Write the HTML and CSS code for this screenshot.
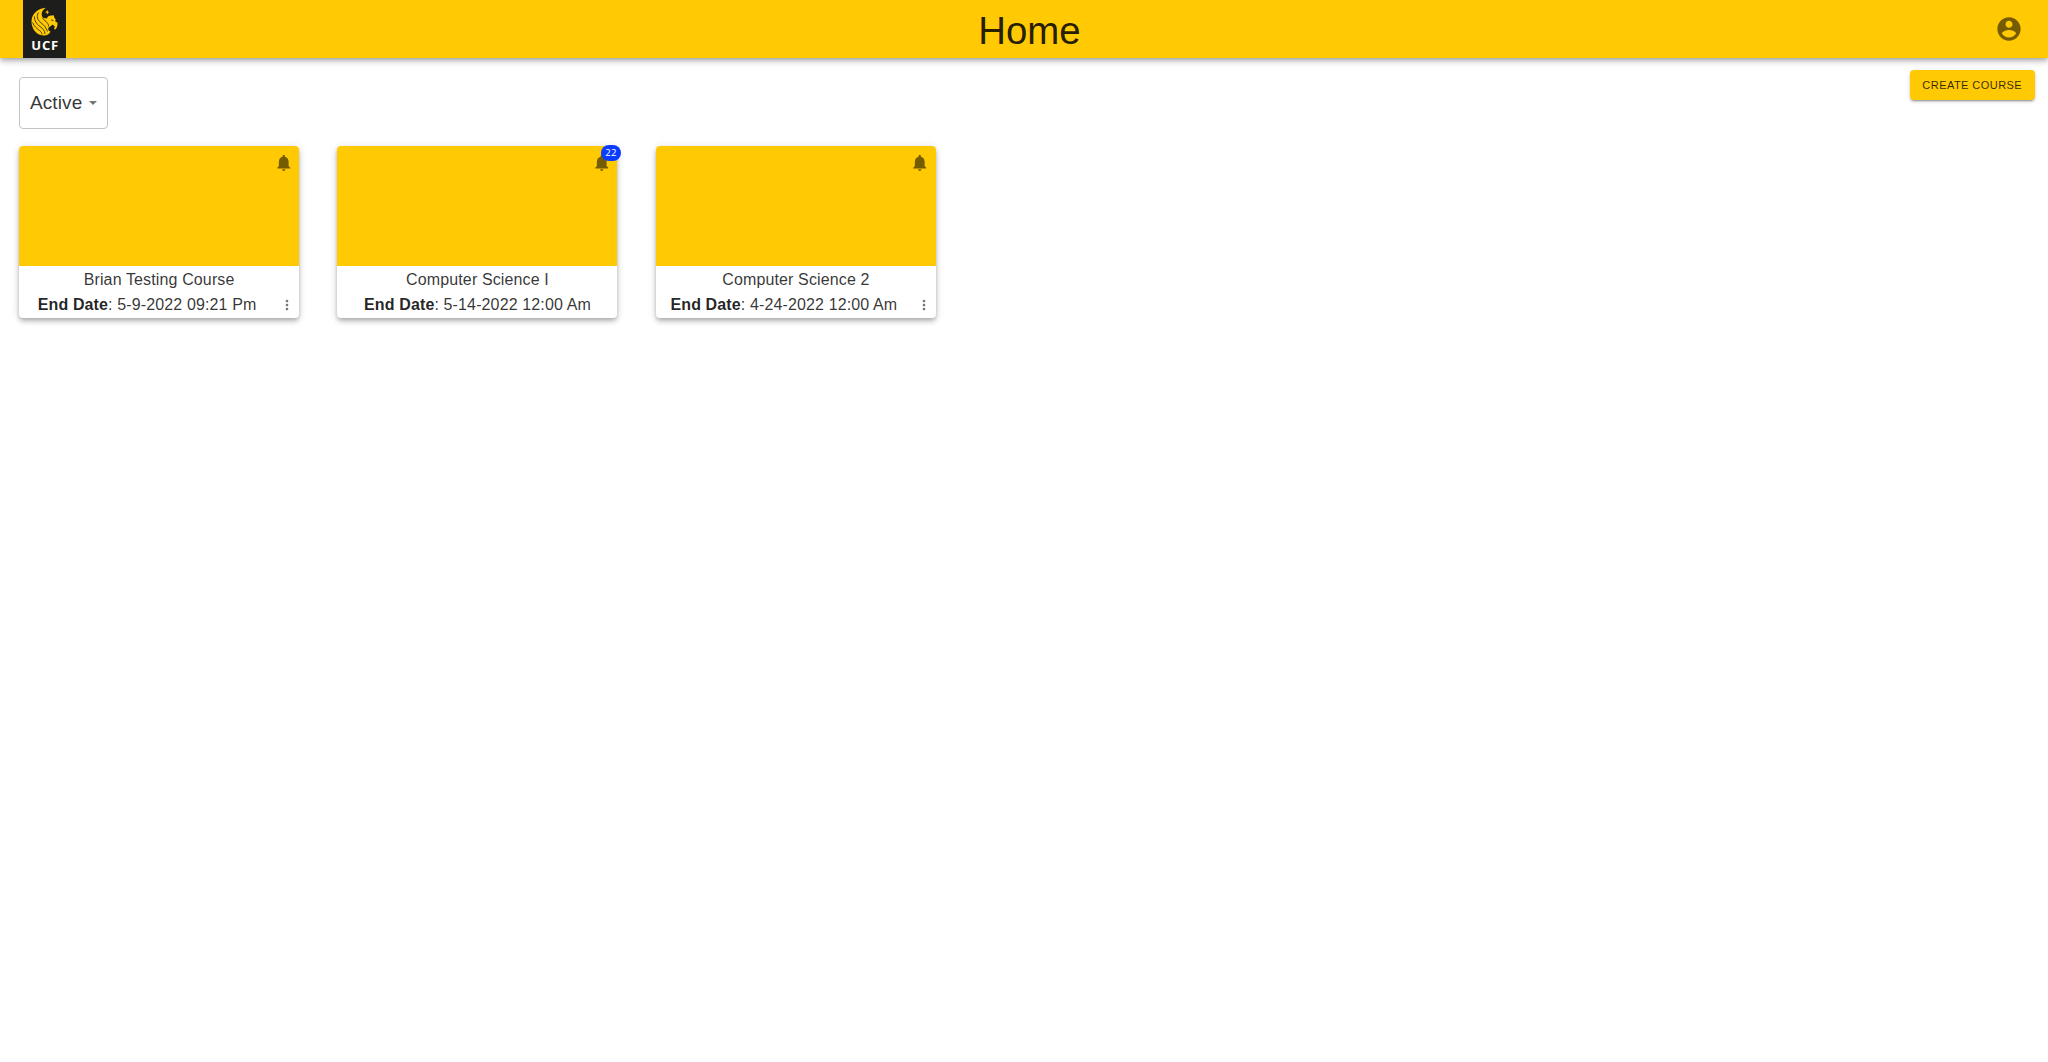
FILE: index.html
```html
<!DOCTYPE html>
<html lang="en">
<head>
<meta charset="utf-8">
<title>Home</title>
<link rel="stylesheet" href="styles.css">
</head>
<body>
<svg class="sprite" aria-hidden="true">
  <symbol id="bell" viewBox="0 0 24 24"><path d="M12 22c1.1 0 2-.9 2-2h-4c0 1.1.89 2 2 2zm6-6v-5c0-3.07-1.64-5.64-4.5-6.32V4c0-.83-.67-1.5-1.5-1.5s-1.5.67-1.5 1.5v.68C7.63 5.36 6 7.92 6 11v5l-2 2v1h16v-1l-2-2z"/></symbol>
  <symbol id="more" viewBox="0 0 24 24"><path d="M12 8c1.1 0 2-.9 2-2s-.9-2-2-2-2 .9-2 2 .9 2 2 2zm0 2c-1.100 0-2 .9-2 2s.9 2 2 2 2-.9 2-2-.9-2-2-2zm0 6c-1.100 0-2 .9-2 2s.9 2 2 2 2-.9 2-2-.9-2-2-2z"/></symbol>
</svg>
<header class="bar">
  <div class="logo">
    <svg class="pegasus" viewBox="0 0 27 29">
      <path d="M15 .8C7 1.600.6 6.500.5 14.500.5 22.500 6 28.500 13 28.500 16 28.500 18.500 27 19.500 24.500 17.500 24 16.800 22.500 17.500 20.800 18.500 19.500 20.500 19 21.500 17.500L23.800 19.500 23 22.300 24.800 22.300C26.300 20 26.800 17.500 26.300 15.500L24.300 14.500 24.600 12.500 23.300 10.500 22.800 8.300 21 8.600C18.500 8.300 16.500 9.300 15.800 11.500L11.800 10.800C9.500 7 11 3 15 .8Z"/>
      <path class="cut" d="M7.500 5.500C5 9.500 6.500 13 10 15.800S15 20.500 16.500 24.500M3.500 9.500C3.200 13.500 5.500 17 9 19.500S13.500 23.500 14 27M1.500 15.500C3 19.500 6 21.500 8.500 23.500S10.500 26 11 27.500M11.500 11C13 14 17 14.500 17.800 19.500M20 12.800L22.500 13.800"/>
      <path d="M16.300 3L16.900 4.600 18.500 5.200 16.900 5.800 16.300 7.400 15.600 5.800 14 5.200 15.600 4.600Z"/>
    </svg>
    <span class="logo-text">UCF</span>
  </div>
  <h1 class="title">Home</h1>
  <svg class="account" viewBox="0 0 24 24"><path d="M12 2C6.480 2 2 6.480 2 12s4.480 10 10 10 10-4.480 10-10S17.520 2 12 2zm0 3c1.660 0 3 1.340 3 3s-1.340 3-3 3-3-1.340-3-3 1.340-3 3-3zm0 14.200c-2.500 0-4.710-1.280-6-3.220.03-1.990 4-3.080 6-3.080 1.990 0 5.970 1.090 6 3.080-1.290 1.940-3.500 3.220-6 3.220z"/></svg>
</header>
<main>
  <div class="tools">
    <div class="select">Active<svg class="arrow" viewBox="0 0 10 5"><path d="M0 0h10L5 5z"/></svg></div>
    <button class="create">CREATE COURSE</button>
  </div>
  <section class="cards">
    <article class="card">
      <div class="media"><svg class="bell"><use href="#bell"/></svg></div>
      <div class="name">Brian Testing Course</div>
      <div class="foot"><span class="date"><b>End Date</b>: 5-9-2022 09:21 Pm</span><svg class="more"><use href="#more"/></svg></div>
    </article>
    <article class="card">
      <div class="media"><svg class="bell"><use href="#bell"/></svg><span class="badge">22</span></div>
      <div class="name">Computer Science I</div>
      <div class="foot"><span class="date"><b>End Date</b>: 5-14-2022 12:00 Am</span></div>
    </article>
    <article class="card">
      <div class="media"><svg class="bell"><use href="#bell"/></svg></div>
      <div class="name">Computer Science 2</div>
      <div class="foot"><span class="date"><b>End Date</b>: 4-24-2022 12:00 Am</span><svg class="more"><use href="#more"/></svg></div>
    </article>
  </section>
</main>
</body>
</html>
```
FILE: styles.css
```css
* { box-sizing: border-box; }
body {
  margin: 0;
  background: #fff;
  color: rgba(0, 0, 0, .8);
  font-family: "Liberation Sans", Arial, sans-serif;
}
.sprite { display: none; }
.bar {
  display: flex;
  align-items: center;
  height: 57.600px;
  padding: 0 25.500px 0 23px;
  background: #ffc904;
  box-shadow: 0 2px 4px -1px rgba(0,0,0,.2), 0 4px 5px rgba(0,0,0,.14), 0 1px 10px rgba(0,0,0,.12);
}
.logo {
  display: flex;
  flex-direction: column;
  align-items: center;
  width: 43.300px;
  height: 57.600px;
  padding-top: 7px;
  background: #1d1d1b;
}
.pegasus { width: 27px; height: 29px; fill: #ffc904; }
.cut { fill: none; stroke: #1d1d1b; stroke-width: .8; }
.logo-text {
  margin-top: 2px;
  color: #fff;
  font: 700 13px/15px "Open Sans", sans-serif;
  letter-spacing: .8px;
  padding-left: 1px;
}
.title {
  flex: 1;
  margin: 0;
  padding: 5px 2px 0 0;
  color: rgba(0, 0, 0, .87);
  font-size: 38.400px;
  font-weight: 400;
  line-height: 46px;
  text-align: center;
}
.account { width: 28px; height: 28px; margin-top: 1px; fill: rgba(0,0,0,.54); }
.tools {
  display: flex;
  justify-content: space-between;
  align-items: flex-start;
  padding: 12.400px 13px 0 19px;
}
.select {
  display: flex;
  align-items: center;
  width: 89px;
  height: 52px;
  margin-top: 7px;
  padding-left: 10px;
  border: 1px solid #c4c4c4;
  border-radius: 4px;
  font-size: 19px;
  letter-spacing: .1px;
}
.arrow { width: 8px; height: 4px; margin: 1px 0 0 7px; fill: #757575; }
.create {
  width: 125.500px;
  height: 30px;
  padding: 0;
  border: 0;
  border-radius: 4px;
  background: #ffc904;
  color: rgba(0,0,0,.8);
  font: 11px/20px "Liberation Sans", Arial, sans-serif;
  letter-spacing: .45px;
  box-shadow: 0 3px 1px -2px rgba(0,0,0,.2), 0 2px 2px rgba(0,0,0,.14), 0 1px 5px rgba(0,0,0,.12);
}
.cards {
  display: flex;
  gap: 38.400px;
  padding: 17px 19.100px;
}
.card {
  width: 280px;
  height: 172px;
  border-radius: 4px;
  background: #fff;
  font-size: 16px;
  letter-spacing: .13px;
  text-align: center;
  box-shadow: 0 2px 4px -1px rgba(0,0,0,.2), 0 4px 5px rgba(0,0,0,.14), 0 1px 10px rgba(0,0,0,.12);
}
.media {
  position: relative;
  display: flex;
  justify-content: flex-end;
  height: 120px;
  padding: 7px 6px 0 0;
  border-radius: 4px 4px 0 0;
  background: #ffc904;
}
.bell { width: 19.500px; height: 19.500px; fill: rgba(0,0,0,.54); }
.badge {
  position: absolute;
  top: -1px;
  right: -3.500px;
  width: 20px;
  height: 16px;
  border-radius: 8px;
  background: #0a3cff;
  color: #fff;
  font: 400 9.600px/16px "Open Sans", sans-serif;
}
.name { height: 26px; line-height: 28px; }
.foot {
  display: flex;
  align-items: center;
  height: 26px;
}
.date { flex: 1; }
.date b { color: rgba(0, 0, 0, .87); }
.more { width: 16px; height: 16px; margin: 0 4px; fill: rgba(0,0,0,.54); }
```
